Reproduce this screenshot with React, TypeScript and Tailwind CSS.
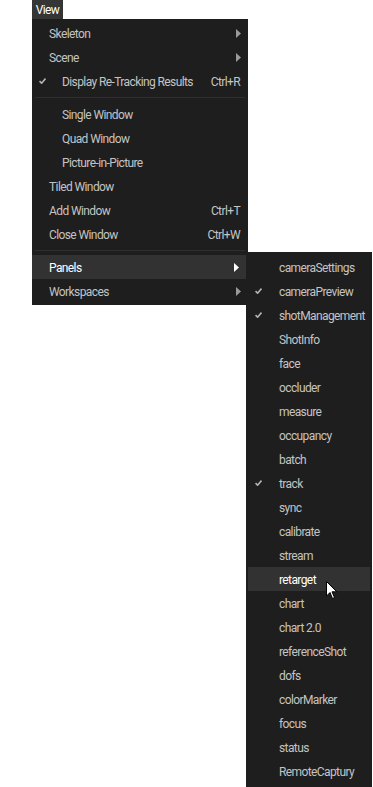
import React from "react";

type Item = {
  label?: string;
  check?: boolean;
  indent?: boolean;
  shortcut?: string;
  sub?: boolean;
  active?: boolean;
  sep?: boolean;
};

const mainItems: Item[] = [
  { label: "Skeleton", sub: true },
  { label: "Scene", sub: true },
  { label: "Display Re-Tracking Results", check: true, indent: true, shortcut: "Ctrl+R" },
  { sep: true },
  { label: "Single Window", indent: true },
  { label: "Quad Window", indent: true },
  { label: "Picture-in-Picture", indent: true },
  { label: "Tiled Window" },
  { label: "Add Window", shortcut: "Ctrl+T" },
  { label: "Close Window", shortcut: "Ctrl+W" },
  { sep: true },
  { label: "Panels", sub: true, active: true },
  { label: "Workspaces", sub: true },
];

const panels: { label: string; check?: boolean; hover?: boolean }[] = [
  { label: "cameraSettings" },
  { label: "cameraPreview", check: true },
  { label: "shotManagement", check: true },
  { label: "ShotInfo" },
  { label: "face" },
  { label: "occluder" },
  { label: "measure" },
  { label: "occupancy" },
  { label: "batch" },
  { label: "track", check: true },
  { label: "sync" },
  { label: "calibrate" },
  { label: "stream" },
  { label: "retarget", hover: true },
  { label: "chart" },
  { label: "chart 2.0" },
  { label: "referenceShot" },
  { label: "dofs" },
  { label: "colorMarker" },
  { label: "focus" },
  { label: "status" },
  { label: "RemoteCaptury" },
];

function Check() {
  return (
    <svg width="7" height="6" viewBox="0 0 7 6" className="block">
      <path d="M0.5 3.2 L2.6 5.2 L6.5 0.6" stroke="#b4b4b4" strokeWidth="1.6" fill="none" />
    </svg>
  );
}

function Arrow({ white }: { white?: boolean }) {
  return (
    <svg width="5" height="9" viewBox="0 0 5 9" className="block">
      <path d="M0 0 L5 4.5 L0 9 Z" fill={white ? "#ffffff" : "#9a9a9a"} />
    </svg>
  );
}

function Cursor() {
  return (
    <svg width="12" height="19" viewBox="0 0 12 19" className="absolute left-[326px] top-[581px]">
      <path d="M0.5 0.5 L0.5 15 L4 11.5 L6.5 17.5 L8.5 16.5 L6 10.8 L10.8 10.8 Z" fill="#ffffff" stroke="#000000" strokeWidth="1" />
    </svg>
  );
}

export default function App() {
  return (
    <div className="relative h-[787px] w-[373px] overflow-hidden whitespace-nowrap bg-white font-['Roboto',sans-serif] text-[12px] leading-none tracking-[-0.6px]">
      <div className="ml-[32px] flex h-[19px] w-[31px] items-center justify-center bg-[#353535] pt-[1px] text-white">View</div>

      <div className="ml-[32px] w-[216px] bg-[#1e1e1e] pb-[2px] pt-[2px]">
        {mainItems.map((it, i) =>
          it.sep ? (
            <div key={i} className="flex h-[9px] items-center px-[3px]">
              <div className="h-px w-full bg-[#2f2f2f]" />
            </div>
          ) : (
            <div
              key={i}
              className={`flex h-[24px] items-center pr-[6px] ${it.active ? "mr-[2px] bg-[#323232] text-white" : "text-[#c4c4c4]"}`}
            >
              <div className="flex w-[17px] justify-end pr-[3px]">{it.check && <Check />}</div>
              <div className={`flex-1 pt-[2px] ${it.indent ? "pl-[13px]" : ""}`}>{it.label}</div>
              {it.shortcut && <div className="pr-[2px] pt-[2px]">{it.shortcut}</div>}
              {it.sub && (
                <div className="pr-[1px]">
                  <Arrow white={it.active} />
                </div>
              )}
            </div>
          )
        )}
      </div>

      <div className="absolute left-[246px] top-[252px] w-[126px] bg-[#1e1e1e] pt-[3px] pb-[4px]">
        {panels.map((p) => (
          <div
            key={p.label}
            className={`flex h-[24px] items-center ${p.hover ? "mx-[2px] bg-[#323232] text-white" : "text-[#c4c4c4]"}`}
          >
            <div className={`flex justify-end ${p.hover ? "w-[14px]" : "w-[16px]"}`}>{p.check && <Check />}</div>
            <div className="pl-[17px] pt-[2px]">{p.label}</div>
          </div>
        ))}
      </div>

      <Cursor />
    </div>
  );
}
